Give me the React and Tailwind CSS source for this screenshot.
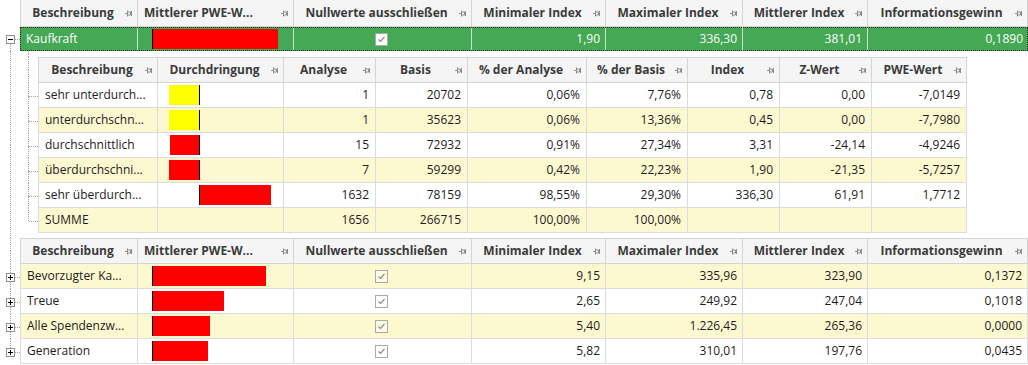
import React from "react";

const TOP_HEAD = [
  { label: "Beschreibung", w: "w-[118px] border-l" },
  { label: "Mittlerer PWE-W...", w: "w-[156px]", left: true },
  { label: "Nullwerte ausschließen", w: "w-[178px]" },
  { label: "Minimaler Index", w: "w-[134px]" },
  { label: "Maximaler Index", w: "w-[137px]" },
  { label: "Mittlerer Index", w: "w-[125px]" },
  { label: "Informationsgewinn", w: "w-[160px]" },
];

const SUB_HEAD = [
  { label: "Beschreibung", w: "w-[120px] border-l" },
  { label: "Durchdringung", w: "w-[126px]" },
  { label: "Analyse", w: "w-[92px]" },
  { label: "Basis", w: "w-[92px]" },
  { label: "% der Analyse", w: "w-[119px]" },
  { label: "% der Basis", w: "w-[101px]" },
  { label: "Index", w: "w-[92px]" },
  { label: "Z-Wert", w: "w-[92px]" },
  { label: "PWE-Wert", w: "w-[95px]" },
];

// bar: left offset inside the Durchdringung cell, width, colour, negative?
const SUB_ROWS = [
  { name: "sehr unterdurch...", bar: { ml: 11, w: 30, c: "yellow", neg: true }, v: ["1", "20702", "0,06%", "7,76%", "0,78", "0,00", "-7,0149"] },
  { name: "unterdurchschn...", bar: { ml: 11, w: 30, c: "yellow", neg: true }, v: ["1", "35623", "0,06%", "13,36%", "0,45", "0,00", "-7,7980"], alt: true },
  { name: "durchschnittlich", bar: { ml: 12, w: 29, c: "red", neg: true }, v: ["15", "72932", "0,91%", "27,34%", "3,31", "-24,14", "-4,9246"] },
  { name: "überdurchschni...", bar: { ml: 11, w: 30, c: "red", neg: true }, v: ["7", "59299", "0,42%", "22,23%", "1,90", "-21,35", "-5,7257"], alt: true },
  { name: "sehr überdurch...", bar: { ml: 41, w: 71, c: "red" }, v: ["1632", "78159", "98,55%", "29,30%", "336,30", "61,91", "1,7712"] },
  { name: "SUMME", bar: null, v: ["1656", "266715", "100,00%", "100,00%", "", "", ""], alt: true, last: true },
];

const MAIN_ROWS = [
  { name: "Bevorzugter Ka...", bar: 113, v: ["9,15", "335,96", "323,90", "0,1372"], alt: true },
  { name: "Treue", bar: 71, v: ["2,65", "249,92", "247,04", "0,1018"] },
  { name: "Alle Spendenzw...", bar: 57, v: ["5,40", "1.226,45", "265,36", "0,0000"], alt: true },
  { name: "Generation", bar: 55, v: ["5,82", "310,01", "197,76", "0,0435"], last: true },
];

function Pin() {
  return (
    <svg width="7" height="7" viewBox="0 0 7 7" className="mr-[5px] shrink-0" fill="none" stroke="#8c8c8c" strokeWidth="1">
      <path d="M0 3.5H2.5M2.5 0.5V6.5M2.5 2H5.5V5H2.5M6.5 1V6" />
    </svg>
  );
}

function Check({ onGreen }) {
  return (
    <div className={`flex h-[13px] w-[13px] items-center justify-center border border-[#a9a9a9] ${onGreen ? "bg-white" : "bg-white/40"}`}>
      <svg width="11" height="11" viewBox="0 0 11 11" fill="none" stroke="#8d8d8d" strokeWidth="1.2">
        <path d="M2.5 5.5L4.5 7.5L8.5 3" />
      </svg>
    </div>
  );
}

function Box({ plus }) {
  return (
    <div className="absolute left-[6px] top-1/2 -mt-[4px] flex h-[9px] w-[9px] items-center justify-center border border-[#8f8f8f] bg-white">
      <div className="relative h-[5px] w-[5px]">
        <div className="absolute left-0 top-[2px] h-px w-[5px] bg-black" />
        {plus && <div className="absolute left-[2px] top-0 h-[5px] w-px bg-black" />}
      </div>
    </div>
  );
}

// tree connectors in the 20px outer gutter
function OuterGutter({ up, down, branch, box }) {
  return (
    <div className="relative w-[20px] shrink-0 self-stretch">
      {up && <div className="absolute left-[10px] top-0 h-1/2 border-l border-dotted border-[#a3a3a3]" />}
      {down && <div className="absolute left-[10px] top-1/2 bottom-0 border-l border-dotted border-[#a3a3a3]" />}
      {branch && <div className="absolute left-[15px] right-0 top-1/2 border-t border-dotted border-[#a3a3a3]" />}
      {box && <Box plus={box === "plus"} />}
    </div>
  );
}

// tree connectors in the 18px inner gutter of the detail grid
function InnerGutter({ up, down, branch }) {
  return (
    <div className="relative w-[18px] shrink-0 self-stretch">
      {up && <div className="absolute left-[8px] top-0 h-1/2 border-l border-dotted border-[#a3a3a3]" />}
      {down && <div className="absolute left-[8px] top-1/2 bottom-0 border-l border-dotted border-[#a3a3a3]" />}
      {branch && <div className="absolute left-[9px] right-0 top-1/2 border-t border-dotted border-[#a3a3a3]" />}
    </div>
  );
}

function HeaderRow({ cols, className }) {
  return (
    <div className={`flex border-[#d4d4d4] bg-[#f5f5f5] font-bold text-[#3b3b3b] ${className}`}>
      {cols.map((c) => (
        <div key={c.label} className={`flex h-full items-center border-r border-[#d4d4d4] ${c.w}`}>
          <span className={`flex-1 truncate whitespace-nowrap ${c.left ? "pl-[6px] text-left" : "text-center"}`}>{c.label}</span>
          <Pin />
        </div>
      ))}
    </div>
  );
}

function MainCells({ name, bar, v, green, alt }) {
  const line = green ? "border-r border-white/70" : "border-r border-[#dcdcdc]";
  const bg = green ? "" : alt ? "bg-[#fcf8d0]" : "bg-white";
  return (
    <div className={`flex h-full ${bg}`}>
      <div className={`flex w-[118px] items-center pl-[6px] ${line} ${green ? "" : "border-l"}`}>
        <span className="truncate whitespace-nowrap">{name}</span>
      </div>
      <div className={`flex w-[156px] items-center pl-[14px] ${line}`}>
        <div className="h-[20px] w-px bg-black" />
        <div className="h-[20px] bg-[#ff0000]" style={{ width: bar }} />
      </div>
      <div className={`flex w-[178px] items-center justify-center pr-[2px] ${line}`}>
        <Check onGreen={green} />
      </div>
      <div className={`flex w-[134px] items-center justify-end pr-[5px] ${line}`}>{v[0]}</div>
      <div className={`flex w-[137px] items-center justify-end pr-[5px] ${line}`}>{v[1]}</div>
      <div className={`flex w-[125px] items-center justify-end pr-[5px] ${line}`}>{v[2]}</div>
      <div className={`flex w-[160px] items-center justify-end pr-[5px] ${green ? "" : "border-r border-[#dcdcdc]"}`}>{v[3]}</div>
    </div>
  );
}

function SubRow({ row }) {
  const widths = ["w-[92px]", "w-[92px]", "w-[119px]", "w-[101px]", "w-[92px]", "w-[92px]", "w-[95px]"];
  const { bar } = row;
  return (
    <div className="flex h-[25px]">
      <InnerGutter up down={!row.last} branch />
      <div className={`flex border-b border-[#dcdcdc] ${row.alt ? "bg-[#fcf8d0]" : "bg-white"}`}>
        <div className="flex w-[120px] items-center border-x border-[#dcdcdc] pl-[6px]">
          <span className="truncate whitespace-nowrap">{row.name}</span>
        </div>
        <div className="flex w-[126px] items-center border-r border-[#dcdcdc]">
          {bar && (
            <div className="flex items-center" style={{ marginLeft: bar.ml }}>
              {!bar.neg && <div className="h-[20px] w-px bg-black" />}
              <div className={`h-[20px] ${bar.c === "yellow" ? "bg-[#ffff00]" : "bg-[#ff0000]"}`} style={{ width: bar.w }} />
              {bar.neg && <div className="h-[20px] w-px bg-black" />}
            </div>
          )}
        </div>
        {row.v.map((val, i) => (
          <div key={i} className={`flex items-center justify-end border-r border-[#dcdcdc] pr-[6px] ${widths[i]}`}>
            {val}
          </div>
        ))}
      </div>
    </div>
  );
}

export default function App() {
  return (
    <div className="h-[365px] w-[1028px] overflow-hidden bg-white font-['Open_Sans',sans-serif] text-[12px] text-[#1c1c1c]">
      {/* top header */}
      <div className="flex h-[27px]">
        <OuterGutter />
        <HeaderRow cols={TOP_HEAD} className="h-[27px] border-b" />
      </div>

      {/* expanded, selected row */}
      <div className="flex h-[24px]">
        <OuterGutter down branch box="minus" />
        <div className="bg-[#44a854] text-white outline-1 -outline-offset-1 outline-dotted outline-[#2a2a2a]">
          <MainCells name="Kaufkraft" bar={125} v={["1,90", "336,30", "381,01", "0,1890"]} green />
        </div>
      </div>

      {/* detail grid */}
      <div className="flex">
        <OuterGutter up down />
        <div className="flex flex-col">
          <div className="flex h-[6px]">
            <InnerGutter up down />
          </div>
          <div className="flex h-[26px]">
            <InnerGutter up down />
            <HeaderRow cols={SUB_HEAD} className="h-[26px] border-y" />
          </div>
          {SUB_ROWS.map((r) => (
            <SubRow key={r.name} row={r} />
          ))}
          <div className="h-[5px]" />
        </div>
      </div>

      {/* remaining rows */}
      <div className="flex h-[26px]">
        <OuterGutter up down />
        <HeaderRow cols={TOP_HEAD} className="h-[26px] border-y" />
      </div>
      {MAIN_ROWS.map((r) => (
        <div key={r.name} className="flex h-[25px]">
          <OuterGutter up down={!r.last} branch box="plus" />
          <div className="border-b border-[#dcdcdc]">
            <MainCells name={r.name} bar={r.bar} v={r.v} alt={r.alt} />
          </div>
        </div>
      ))}
    </div>
  );
}
